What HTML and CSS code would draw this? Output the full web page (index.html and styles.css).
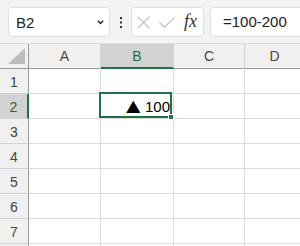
FILE: index.html
```html
<!DOCTYPE html>
<html lang="ja">
<head>
    <meta charset="UTF-8">
    <title>Sheet</title>
    <link rel="stylesheet" href="styles.css">
</head>
<body>
    <div class="toolbar">
        <div class="name-box">
            <span>B2</span>
            <svg class="chevron" width="7" height="5" viewBox="0 0 7 5"><path d="M0.8 0.8 L3.5 3.6 L6.2 0.8" fill="none" stroke="#222" stroke-width="1.4"/></svg>
        </div>
        <div class="dots">
            <svg width="2" height="11" viewBox="0 0 2 11"><rect x="0" y="0" width="2" height="2" fill="#333"/><rect x="0" y="4.5" width="2" height="2" fill="#333"/><rect x="0" y="9" width="2" height="2" fill="#333"/></svg>
        </div>
        <div class="fx-box">
            <svg class="icon-x" width="13" height="13" viewBox="0 0 13 13"><path d="M0.5 0.5 L12.5 12.5 M12.5 0.5 L0.5 12.5" stroke="#c4c4c4" stroke-width="1.2"/></svg>
            <svg class="icon-check" width="16" height="11" viewBox="0 0 16 11"><path d="M0.5 5.5 L5.5 10.3 L15.5 0.5" fill="none" stroke="#c4c4c4" stroke-width="1.2"/></svg>
            <span class="fx">fx</span>
        </div>
        <div class="formula">=100-200</div>
    </div>

    <div class="sheet">
        <div class="corner"><span class="corner-mark"></span></div>
        <div class="col-head">A</div>
        <div class="col-head active">B</div>
        <div class="col-head">C</div>
        <div class="col-head">D</div>

        <div class="row-head">1</div>
        <div class="cell"></div><div class="cell"></div><div class="cell"></div><div class="cell"></div>

        <div class="row-head active">2</div>
        <div class="cell"></div>
        <div class="cell selected"><span class="tri">▲</span> 100<span class="handle"></span></div>
        <div class="cell"></div><div class="cell"></div>

        <div class="row-head">3</div>
        <div class="cell"></div><div class="cell"></div><div class="cell"></div><div class="cell"></div>
        <div class="row-head">4</div>
        <div class="cell"></div><div class="cell"></div><div class="cell"></div><div class="cell"></div>
        <div class="row-head">5</div>
        <div class="cell"></div><div class="cell"></div><div class="cell"></div><div class="cell"></div>
        <div class="row-head">6</div>
        <div class="cell"></div><div class="cell"></div><div class="cell"></div><div class="cell"></div>
        <div class="row-head">7</div>
        <div class="cell"></div><div class="cell"></div><div class="cell"></div><div class="cell"></div>
        <!-- wiersz 8 widoczny tylko jako krawędź -->
        <div class="row-head"></div>
        <div class="cell"></div><div class="cell"></div><div class="cell"></div><div class="cell"></div>
    </div>
</body>
</html>
```

FILE: styles.css
```css
/* Layout ogólny */
* {
    box-sizing: border-box;
}

body {
    margin: 0;
    width: 300px;
    height: 246px;
    overflow: hidden;
    background-color: #ffffff;
    font-family: "Liberation Sans", Arial, sans-serif;
    color: #222;
}

/* Pasek formuły */
.toolbar {
    display: flex;
    align-items: flex-start;
    height: 44px;
    padding: 7px 0 7px 8px;
    background-color: #f3f3f3;
    overflow: hidden;
}

.toolbar > * {
    flex-shrink: 0;
}

.name-box {
    display: flex;
    align-items: center;
    justify-content: space-between;
    width: 102px;
    height: 30px;
    padding: 0 5px 0 7px;
    background-color: #fff;
    border: 1px solid #e0e0e0;
    border-radius: 4px;
    font-size: 15px;
}

.chevron {
    margin-top: 1px;
}

.dots {
    display: flex;
    justify-content: center;
    align-items: center;
    width: 21px;
    height: 30px;
    padding-top: 1px;
}

.fx-box {
    display: flex;
    align-items: center;
    width: 73px;
    height: 30px;
    padding-left: 5px;
    background-color: #fff;
    border: 1px solid #e0e0e0;
    border-radius: 4px;
}

.icon-x {
    margin-right: 9px;
}

.icon-check {
    margin-right: 9px;
}

.fx {
    font-family: "Liberation Serif", serif;
    font-style: italic;
    font-size: 18px;
    color: #333;
    margin-top: -2px;
}

.formula {
    width: 120px;
    height: 30px;
    margin-left: 6px;
    padding-left: 12px;
    line-height: 28px;
    background-color: #fff;
    border: 1px solid #e0e0e0;
    border-radius: 4px;
    font-size: 15px;
}

/* Arkusz */
.sheet {
    display: grid;
    grid-template-columns: 29px 72px 73px 71px 60px;
    grid-auto-rows: 25px;
    border-top: 1px solid #e0e0e0;
    margin-top: -1px;
}

.corner,
.col-head,
.row-head,
.cell {
    border-right: 1px solid #dcdcdc;
    border-bottom: 1px solid #dcdcdc;
}

.corner {
    position: relative;
    background-color: #f0f0f0;
    border-right-color: #9a9a9a;
    border-bottom-color: #9a9a9a;
}

.corner-mark {
    position: absolute;
    left: 8px;
    top: 4px;
    width: 17px;
    height: 16px;
    background-color: #bdbdbd;
    clip-path: polygon(100% 0, 100% 100%, 0 100%);
}

.col-head,
.row-head {
    display: flex;
    align-items: center;
    justify-content: center;
    background-color: #f0f0f0;
    font-size: 14px;
    color: #444;
}

.col-head {
    border-right-color: #d2d2d2;
    border-bottom-color: #9a9a9a;
}

.row-head {
    border-right-color: #9a9a9a;
    border-bottom-color: #d2d2d2;
    padding-top: 1px;
}

.col-head.active {
    background-color: #d2d2d2;
    color: #1d6b3f;
    border-bottom: 2px solid #217346;
}

.row-head.active {
    background-color: #d2d2d2;
    color: #1d6b3f;
    border-right: 2px solid #217346;
}

.cell {
    font-size: 15px;
    color: #000;
}

.cell.selected {
    position: relative;
    display: flex;
    align-items: center;
    justify-content: flex-end;
    padding: 1px 3px 0 0;
    white-space: pre;
}

.tri {
    font-family: "Noto Sans CJK JP", "DejaVu Sans", sans-serif;
    font-size: 15px;
    line-height: 1;
}

.cell.selected::after {
    content: "";
    position: absolute;
    top: -2px;
    left: -2px;
    right: 1px;
    bottom: 0;
    border: 2px solid #217346;
}

.handle {
    position: absolute;
    right: -1px;
    bottom: -2px;
    width: 6px;
    height: 6px;
    background-color: #217346;
    border: 1px solid #fff;
    z-index: 1;
}
```
